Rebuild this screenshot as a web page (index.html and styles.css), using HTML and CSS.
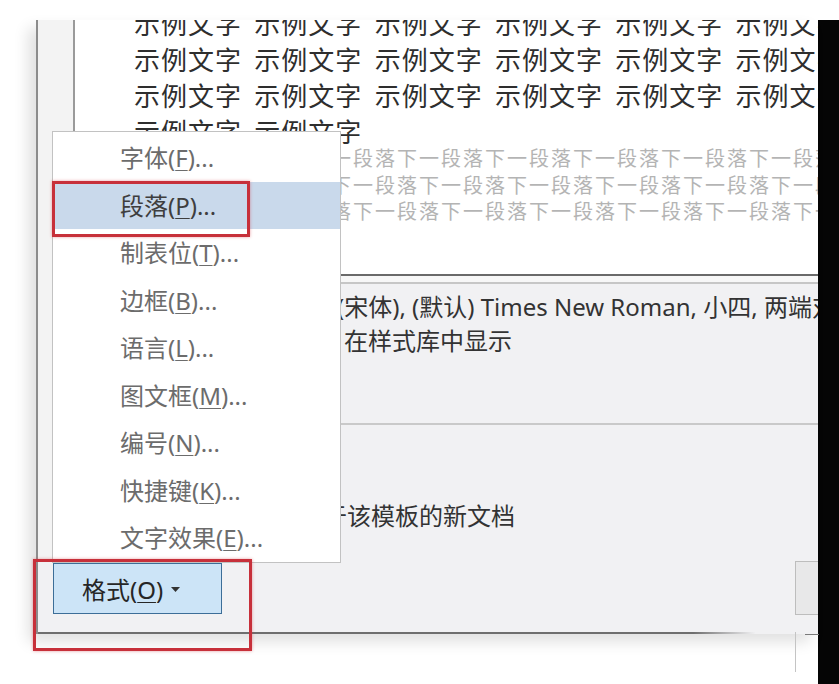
FILE: index.html
```html
<!DOCTYPE html>
<html lang="zh-CN">
<head>
    <meta charset="UTF-8">
    <meta name="viewport" content="width=device-width, initial-scale=1.0">
    <title>修改样式 - 格式菜单</title>
    <link rel="stylesheet" href="styles.css">
</head>
<body>

<div class="screen">
    <div class="gutter"></div>

    <!-- 修改样式对话框 -->
    <div class="dialog">
        <div class="body">
            <div class="strip"></div>
            <div class="main">
                <!-- 预览 -->
                <div class="preview">
                    <div class="sample">
                        <div class="line">示例文字 示例文字 示例文字 示例文字 示例文字 示例文字 示例文字</div>
                        <div class="line">示例文字 示例文字 示例文字 示例文字 示例文字 示例文字 示例文字</div>
                        <div class="line">示例文字 示例文字 示例文字 示例文字 示例文字 示例文字 示例文字</div>
                        <div class="line">示例文字 示例文字</div>
                    </div>
                    <div class="next-para">
                        <div class="line">下一段落下一段落下一段落下一段落下一段落下一段落下一段落下一段落</div>
                        <div class="line">落下一段落下一段落下一段落下一段落下一段落下一段落下一段落下一段</div>
                        <div class="line">段落下一段落下一段落下一段落下一段落下一段落下一段落下一段落下一</div>
                    </div>
                </div>
                <div class="band"></div>
                <!-- 样式说明 -->
                <div class="desc">
                    <div class="desc-line first">(宋体), (默认) Times New Roman, 小四, 两端对齐</div>
                    <div class="desc-line second">在样式库中显示</div>
                </div>
                <div class="options">
                    <div class="option">基于该模板的新文档</div>
                </div>
            </div>
        </div>
        <div class="footer">
            <button class="format-btn"><span>格式(<u>O</u>)</span>
                <svg class="caret" width="9" height="5" viewBox="0 0 9 5"><path d="M0 0 L9 0 L4.5 5 Z" fill="#333"/></svg>
            </button>
            <button class="ok-btn"></button>
        </div>
    </div>

    <div class="blackbar"></div>

    <!-- 格式下拉菜单 -->
    <div class="menu">
        <div class="menu-item">字体(<u>F</u>)...</div>
        <div class="menu-item active">段落(<u>P</u>)...</div>
        <div class="menu-item">制表位(<u>T</u>)...</div>
        <div class="menu-item">边框(<u>B</u>)...</div>
        <div class="menu-item">语言(<u>L</u>)...</div>
        <div class="menu-item">图文框(<u>M</u>)...</div>
        <div class="menu-item">编号(<u>N</u>)...</div>
        <div class="menu-item">快捷键(<u>K</u>)...</div>
        <div class="menu-item">文字效果(<u>E</u>)...</div>
    </div>

    <!-- 红色标注框 -->
    <div class="mark mark-para"></div>
    <div class="mark mark-format"></div>

    <div class="ghost"></div>
</div>

</body>
</html>
```

FILE: styles.css
```css
body {
    margin: 0;
    padding: 0;
    background: #fff;
    font-family: "Noto Sans", "Noto Sans CJK SC", sans-serif;
    color: #333;
}

.screen {
    position: relative;
    width: 839px;
    height: 684px;
    padding-top: 20px;
    box-sizing: border-box;
    display: flex;
    align-items: flex-start;
    overflow: hidden;
}

.gutter {
    width: 36px;
    flex: none;
}

.dialog {
    position: relative;
    flex: 1;
    height: 614px;
    box-sizing: border-box;
    display: flex;
    flex-direction: column;
    background: #f1f1f3;
    border-left: 2px solid #8c8c8c;
    box-shadow: -8px 8px 14px rgba(0, 0, 0, 0.12);
    overflow: hidden;
}

/* bottom edge fades out toward the right */
.dialog::after {
    content: "";
    position: absolute;
    left: 0;
    right: 0;
    bottom: 0;
    height: 2px;
    background: linear-gradient(90deg, #6e6e6e 84%, rgba(110, 110, 110, 0) 92%);
}

.body {
    flex: 1;
    display: flex;
    min-height: 0;
}

.strip {
    width: 35px;
    flex: none;
    background: #f3f3f3;
}

.main {
    flex: 1;
    display: flex;
    flex-direction: column;
    min-width: 0;
}

/* Preview */
.preview {
    height: 256px;
    box-sizing: border-box;
    background: #fff;
    border-left: 2px solid #9a9a9a;
    border-bottom: 2px solid #6a6a6a;
    overflow: hidden;
}

.line {
    white-space: nowrap;
}

.sample {
    margin-top: -15px;
    padding-left: 59px;
    font-family: "Noto Sans CJK SC", sans-serif;
    font-size: 26px;
    line-height: 36px;
    letter-spacing: 1px;
    word-spacing: 5.5px;
    color: #2e2e2e;
}

.next-para {
    margin-top: -4px;
    padding-left: 58px;
    font-family: "Noto Sans CJK SC", sans-serif;
    font-size: 20px;
    line-height: 26.5px;
    letter-spacing: 2px;
    color: #b4b4b4;
}

.band {
    height: 6px;
    background: #f7f7f7;
    border-bottom: 2px solid #c6c6c6;
}

/* Description */
.desc {
    height: 141px;
    box-sizing: border-box;
    padding-top: 6px;
    border-bottom: 2px solid #c9c9c9;
    font-size: 24px;
    line-height: 34px;
    color: #333;
}

.desc-line {
    white-space: nowrap;
}

.desc-line.first {
    padding-left: 264px;
}

.desc-line.second {
    padding-left: 271px;
}

.options {
    flex: 1;
    padding-top: 74px;
    font-size: 24px;
    line-height: 34px;
    color: #333;
}

.option {
    padding-left: 226px;
    white-space: nowrap;
}

/* Footer buttons */
.footer {
    height: 74px;
    flex: none;
    display: flex;
    justify-content: space-between;
    align-items: flex-start;
    padding-left: 15px;
}

.format-btn {
    margin-top: 3px;
    width: 169px;
    height: 51px;
    box-sizing: border-box;
    padding: 0 0 0 28px;
    display: flex;
    align-items: center;
    gap: 8px;
    background: #cce4f7;
    border: 1px solid #3c6e98;
    border-radius: 0;
    font-family: "Noto Sans", "Noto Sans CJK SC", sans-serif;
    font-size: 24px;
    color: #262626;
}

.format-btn u {
    text-decoration-thickness: 1px;
    text-underline-offset: 3px;
}

.caret {
    margin-top: 2px;
}

.ok-btn {
    margin-top: 1px;
    width: 23px;
    height: 54px;
    box-sizing: border-box;
    background: #e8e8e9;
    border: 1px solid #bdbdbd;
    border-right: none;
    padding: 0;
}

.blackbar {
    width: 21px;
    flex: none;
    align-self: stretch;
    background: #050505;
}

/* Dropdown menu */
.menu {
    position: absolute;
    left: 52px;
    top: 131px;
    width: 289px;
    box-sizing: border-box;
    padding-top: 2px;
    background: #fff;
    border: 1px solid #c2c2c2;
    z-index: 10;
}

.menu-item {
    height: 47.5px;
    line-height: 47.5px;
    padding-left: 67px;
    font-size: 24px;
    color: #6c6c6c;
    white-space: nowrap;
}

.menu-item u {
    text-decoration-thickness: 1px;
    text-underline-offset: 3px;
}

.menu-item.active {
    background: #c9d9eb;
    color: #3e3e3e;
}

/* Red annotation boxes */
.mark {
    position: absolute;
    box-sizing: border-box;
    border: 3px solid #c7303a;
    box-shadow: 0 0 3px rgba(210, 50, 60, 0.45);
    z-index: 20;
}

.mark-para {
    left: 52px;
    top: 181px;
    width: 198px;
    height: 56px;
}

.mark-format {
    left: 33px;
    top: 559px;
    width: 219px;
    height: 92px;
}

/* fragment of the window behind */
.ghost {
    position: absolute;
    left: 795px;
    top: 632px;
    width: 23px;
    height: 40px;
    border-left: 1px solid #c4c4c4;
}

.ghost::after {
    content: "";
    position: absolute;
    left: 9px;
    right: 0;
    top: 2px;
    height: 1px;
    background: #7a7a7a;
}
```
